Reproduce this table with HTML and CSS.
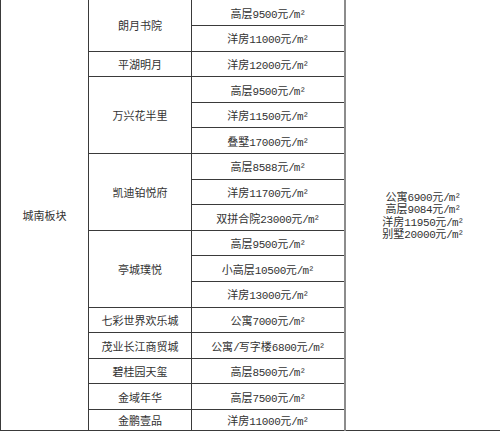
FILE: index.html
```html
<!DOCTYPE html>
<html lang="zh">
<head>
<meta charset="utf-8">
<link rel="stylesheet" href="styles.css">
</head>
<body>
<table class="grid">
  <colgroup>
    <col class="c-area">
    <col class="c-name">
    <col class="c-price">
    <col class="c-avg">
  </colgroup>
  <tbody>
    <tr class="row first">
      <td rowspan="17" class="area">城南板块</td>
      <td rowspan="2">朗月书院</td>
      <td>高层<span class="n">9500</span>元<span class="u">/m²</span></td>
      <td rowspan="17" class="avg">
        <span class="line">公寓<span class="n">6900</span>元<span class="u">/m²</span></span>
        <span class="line">高层<span class="n">9084</span>元<span class="u">/m²</span></span>
        <span class="line">洋房<span class="n">11950</span>元<span class="u">/m²</span></span>
        <span class="line">别墅<span class="n">20000</span>元<span class="u">/m²</span></span>
      </td>
    </tr>
    <tr class="row"><td>洋房<span class="n">11000</span>元<span class="u">/m²</span></td></tr>
    <tr class="row"><td>平湖明月</td><td>洋房<span class="n">12000</span>元<span class="u">/m²</span></td></tr>
    <tr class="row"><td rowspan="3">万兴花半里</td><td>高层<span class="n">9500</span>元<span class="u">/m²</span></td></tr>
    <tr class="row"><td>洋房<span class="n">11500</span>元<span class="u">/m²</span></td></tr>
    <tr class="row"><td>叠墅<span class="n">17000</span>元<span class="u">/m²</span></td></tr>
    <tr class="row"><td rowspan="3">凯迪铂悦府</td><td>高层<span class="n">8588</span>元<span class="u">/m²</span></td></tr>
    <tr class="row"><td>洋房<span class="n">11700</span>元<span class="u">/m²</span></td></tr>
    <tr class="row"><td>双拼合院<span class="n">23000</span>元<span class="u">/m²</span></td></tr>
    <tr class="row"><td rowspan="3">亭城璞悦</td><td>高层<span class="n">9500</span>元<span class="u">/m²</span></td></tr>
    <tr class="row"><td>小高层<span class="n">10500</span>元<span class="u">/m²</span></td></tr>
    <tr class="row"><td>洋房<span class="n">13000</span>元<span class="u">/m²</span></td></tr>
    <tr class="row"><td>七彩世界欢乐城</td><td>公寓<span class="n">7000</span>元<span class="u">/m²</span></td></tr>
    <tr class="row"><td>茂业长江商贸城</td><td>公寓<span class="u">/</span>写字楼<span class="n">6800</span>元<span class="u">/m²</span></td></tr>
    <tr class="row"><td>碧桂园天玺</td><td>高层<span class="n">8500</span>元<span class="u">/m²</span></td></tr>
    <tr class="row"><td>金域年华</td><td>高层<span class="n">7500</span>元<span class="u">/m²</span></td></tr>
    <tr class="row last"><td>金鹏壹品</td><td>洋房<span class="n">11000</span>元<span class="u">/m²</span></td></tr>
  </tbody>
</table>
</body>
</html>
```

FILE: styles.css
```css
html, body {
  margin: 0;
  padding: 0;
  background: #ffffff;
}

.grid {
  width: 500px;
  border-collapse: collapse;
  table-layout: fixed;
  font-family: "Liberation Mono", "Noto Sans CJK SC", monospace;
  font-size: 11px;
  color: #333333;
}

.c-area { width: 88px; }
.c-name { width: 103px; }
.c-price { width: 153px; }
.c-avg { width: 156px; }

.grid td {
  border: 1px solid #3a3a3a;
  padding: 0;
  text-align: center;
  vertical-align: middle;
  white-space: nowrap;
}

.row { height: 25.6px; }
.row.last { height: 21px; }

.first td { border-top: none; }

.grid td.avg {
  border-left: 2px solid #8c8c8c;
  line-height: 12.5px;
  padding-top: 3px;
}

.line { display: block; }

.n { letter-spacing: -0.4px; }
.u { letter-spacing: -1px; }
```
